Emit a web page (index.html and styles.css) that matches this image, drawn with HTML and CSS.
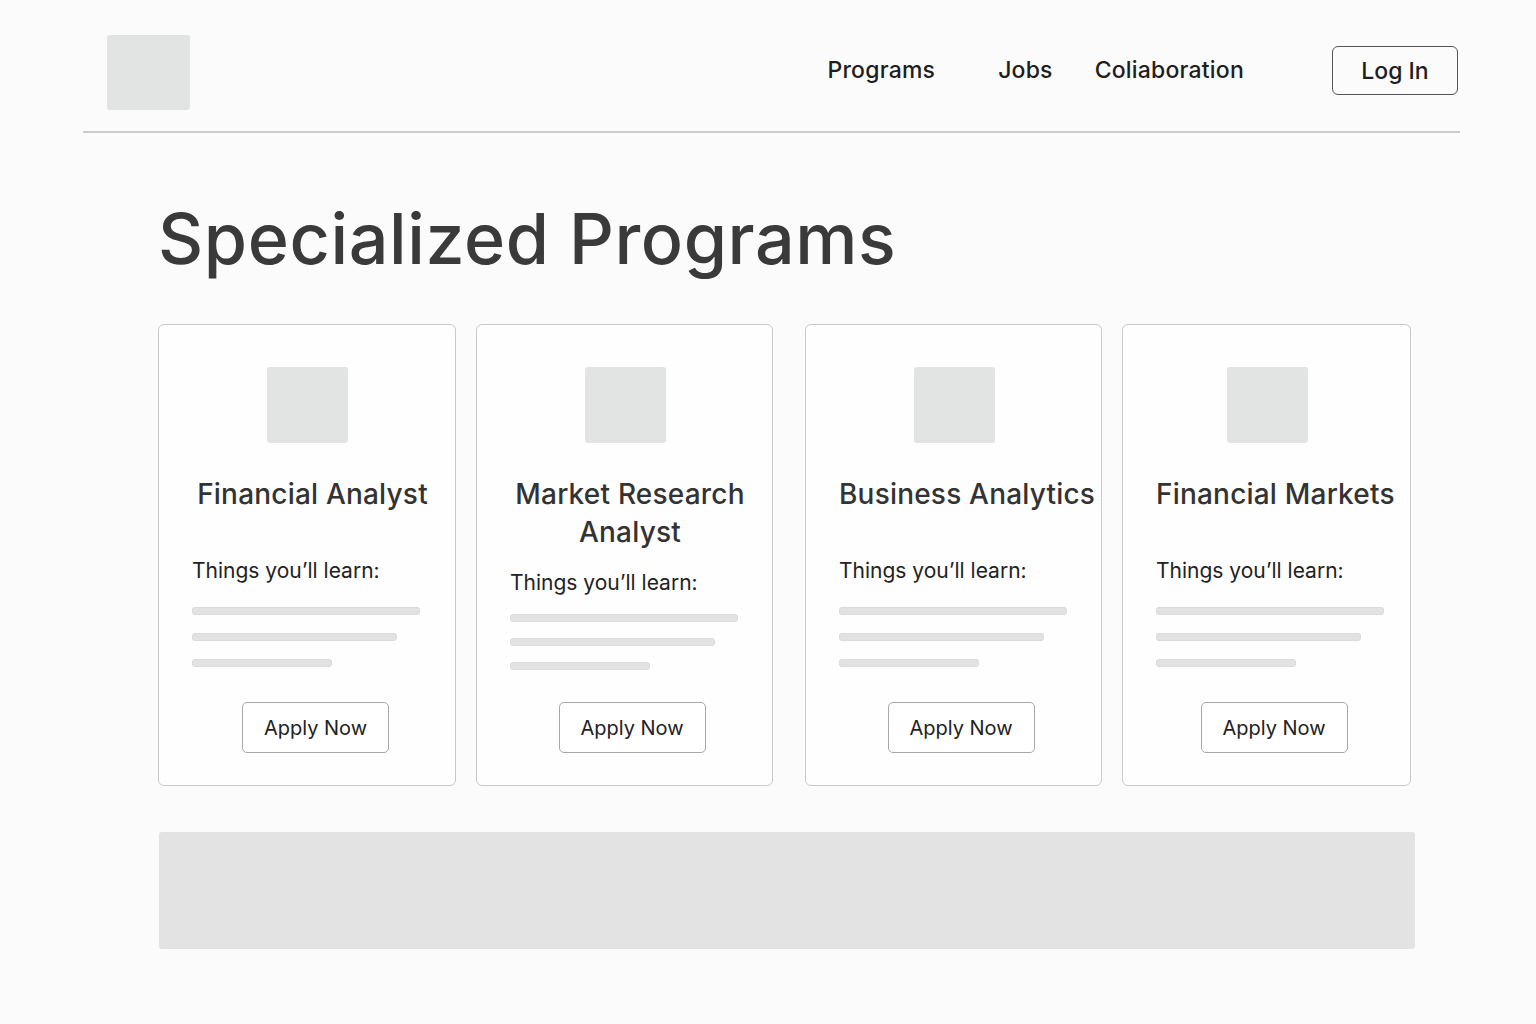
FILE: index.html
```html
<!DOCTYPE html>
<html lang="en">
<head>
<meta charset="utf-8">
<title>Specialized Programs</title>
<link rel="stylesheet" href="styles.css">
</head>
<body>
<header class="header">
  <div class="logo"></div>
  <nav class="nav">
    <a class="nav-link nav-programs" href="#">Programs</a>
    <a class="nav-link nav-jobs" href="#">Jobs</a>
    <a class="nav-link nav-collab" href="#">Coliaboration</a>
    <a class="login" href="#">Log In</a>
  </nav>
</header>
<main class="main">
  <h1 class="title">Specialized Programs</h1>
  <section class="cards">
    <article class="card card-1">
      <div class="card-img"></div>
      <h2 class="card-title">Financial Analyst</h2>
      <p class="learn">Things you’ll learn:</p>
      <div class="lines">
        <span class="line line-a"></span>
        <span class="line line-b"></span>
        <span class="line line-c"></span>
      </div>
      <a class="apply" href="#">Apply Now</a>
    </article>
    <article class="card card-2">
      <div class="card-img"></div>
      <h2 class="card-title">Market Research Analyst</h2>
      <p class="learn">Things you’ll learn:</p>
      <div class="lines">
        <span class="line line-a"></span>
        <span class="line line-b"></span>
        <span class="line line-c"></span>
      </div>
      <a class="apply" href="#">Apply Now</a>
    </article>
    <article class="card card-3">
      <div class="card-img"></div>
      <h2 class="card-title">Business Analytics</h2>
      <p class="learn">Things you’ll learn:</p>
      <div class="lines">
        <span class="line line-a"></span>
        <span class="line line-b"></span>
        <span class="line line-c"></span>
      </div>
      <a class="apply" href="#">Apply Now</a>
    </article>
    <article class="card card-4">
      <div class="card-img"></div>
      <h2 class="card-title">Financial Markets</h2>
      <p class="learn">Things you’ll learn:</p>
      <div class="lines">
        <span class="line line-a"></span>
        <span class="line line-b"></span>
        <span class="line line-c"></span>
      </div>
      <a class="apply" href="#">Apply Now</a>
    </article>
  </section>
  <div class="banner"></div>
</main>
</body>
</html>
```

FILE: styles.css
```css
* { box-sizing: border-box; }

body {
  margin: 0;
  background: #fbfbfb;
  font-family: Inter, "Liberation Sans", Arial, sans-serif;
  color: #222;
}

.header {
  margin: 0 76px 0 83px;
  padding: 35px 2px 21px 24px;
  border-bottom: 2px solid #cbcbcb;
  display: flex;
  align-items: center;
  justify-content: space-between;
}

.logo {
  width: 83px;
  height: 75px;
  background: #e2e3e3;
  border-radius: 3px;
}

.nav {
  display: flex;
  align-items: center;
  margin-top: -5px;
}

.nav-link {
  font-size: 23px;
  font-weight: 500;
  color: #1e1e1e;
  text-decoration: none;
  letter-spacing: 0.2px;
}

.nav-jobs { margin-left: 63px; }
.nav-collab { margin-left: 42px; }

.login {
  margin-left: 88px;
  margin-top: 1px;
  width: 126px;
  height: 49px;
  border: 1.5px solid #555;
  border-radius: 6px;
  display: flex;
  align-items: center;
  justify-content: center;
  font-size: 23px;
  font-weight: 500;
  color: #1e1e1e;
  text-decoration: none;
}

.main {
  padding: 0 121px 0 158px;
}

.title {
  margin: 64px 0 0 0;
  font-size: 70px;
  line-height: 84px;
  font-weight: 500;
  color: #3a3a3a;
  letter-spacing: 0.6px;
}

.cards {
  display: flex;
  gap: 20px;
  margin-top: 43px;
}

.card {
  width: 298px;
  height: 462px;
  background: #fefefe;
  border: 1.5px solid #c9c9c9;
  border-radius: 6px;
  padding: 42px 22px 32px 33px;
  display: flex;
  flex-direction: column;
}

.card-2 { width: 297px; }
.card-3 { width: 297px; margin-left: 12px; }
.card-4 { width: 289px; }

.card-img {
  width: 81px;
  height: 76px;
  background: #e2e3e3;
  border-radius: 3px;
  align-self: center;
  margin-left: -10px;
}

.card-title {
  margin: 32px 0 18px 0;
  min-height: 64px;
  font-size: 28px;
  line-height: 38px;
  font-weight: 500;
  color: #333;
  text-align: center;
  letter-spacing: 0.2px;
}

.card-1 .card-title,
.card-3 .card-title,
.card-4 .card-title { white-space: nowrap; }

.learn {
  margin: 0;
  font-size: 21px;
  line-height: 28px;
  color: #222;
}

.lines {
  margin-top: 22px;
  display: flex;
  flex-direction: column;
  gap: 18px;
}

.card-2 .lines { margin-top: 17px; gap: 16px; }

.line {
  display: block;
  height: 8px;
  border-radius: 4px;
  background: #e2e2e2;
  box-shadow: inset 0 0 0 0.5px #d4d4d4;
}

.line-a { width: 228px; }
.line-b { width: 205px; }
.line-c { width: 140px; }

.apply {
  margin-top: auto;
  margin-left: 4px;
  align-self: center;
  width: 147px;
  height: 51px;
  border: 1.5px solid #a8a8a8;
  border-radius: 5px;
  display: flex;
  align-items: center;
  justify-content: center;
  font-size: 20px;
  color: #222;
  text-decoration: none;
  background: #fff;
}

.card-1 .apply { margin-left: 6px; }

.banner {
  margin-top: 46px;
  margin-left: 1px;
  width: 1256px;
  height: 117px;
  background: #e2e3e2;
  border-radius: 3px;
}
```
